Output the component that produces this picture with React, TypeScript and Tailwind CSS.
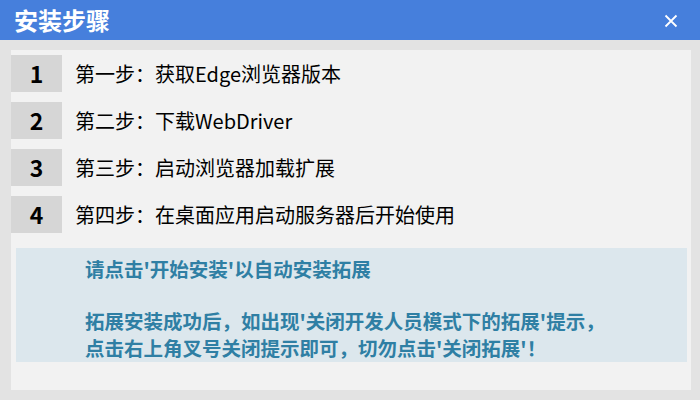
const steps = [
  '第一步：获取Edge浏览器版本',
  '第二步：下载WebDriver',
  '第三步：启动浏览器加载扩展',
  '第四步：在桌面应用启动服务器后开始使用',
];

export default function App() {
  return (
    <div
      className="w-[700px] h-[400px] flex flex-col bg-[#e3e3e3] overflow-hidden"
      style={{ fontFamily: '"Microsoft YaHei", "Noto Sans CJK SC", sans-serif' }}
    >
      <header className="h-[40px] shrink-0 bg-[#467fdc] flex items-center justify-between pl-[14px] pr-[22px]">
        <h1 className="text-[24px] font-bold text-white leading-none">安装步骤</h1>
        <svg width="14" height="14" viewBox="0 0 14 14" className="mt-[2px]">
          <path d="M1.5 1.5 L12.5 12.5 M12.5 1.5 L1.5 12.5" stroke="white" strokeWidth="1.8" />
        </svg>
      </header>

      <div className="flex-1 pt-[10px] pb-[10px] pl-[11px] pr-[9px]">
        <div className="h-full bg-[#f2f2f2] pt-[5px] flex flex-col">
          <div className="flex flex-col gap-[10px]">
            {steps.map((text, i) => (
              <div key={i} className="flex items-center h-[37px]">
                <div className="w-[51px] h-full bg-[#d6d6d6] flex items-center justify-center text-[23px] font-bold text-black">
                  {i + 1}
                </div>
                <span className="ml-[13px] text-[20px] text-black leading-none">{text}</span>
              </div>
            ))}
          </div>

          <div className="mt-[15px] ml-[5px] mr-[4px] h-[114px] bg-[#dce7ed] pl-[69px] pt-[7px] text-[#2f7fa4] font-bold text-[19.5px] leading-[27px]">
            <p>请点击'开始安装'以自动安装拓展</p>
            <p className="mt-[25px]">拓展安装成功后，如出现'关闭开发人员模式下的拓展'提示，</p>
            <p>点击右上角叉号关闭提示即可，切勿点击'关闭拓展'！</p>
          </div>
        </div>
      </div>
    </div>
  );
}
